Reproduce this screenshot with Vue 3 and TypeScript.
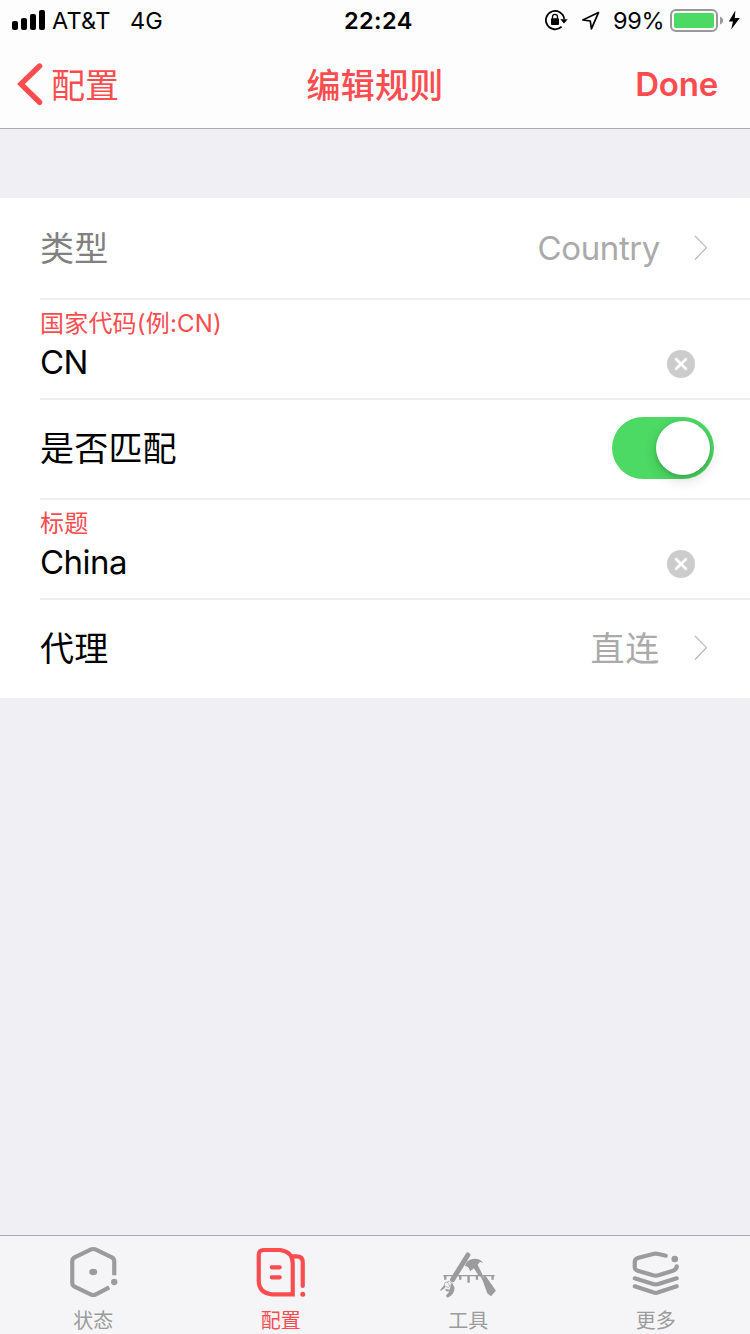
<script setup lang="ts">
import { ref } from 'vue'

interface Tab {
  id: string
  label: string
  viewBox: string
}

const tabs: Tab[] = [
  { id: 'status', label: '状态', viewBox: '-3.75 18 270 198' },
  { id: 'config', label: '配置', viewBox: '3.75 18 270 198' },
  { id: 'tools', label: '工具', viewBox: '-3.75 18 270 198' },
  { id: 'more', label: '更多', viewBox: '3.75 18 270 198' },
]
const activeTab = ref('config')
const code = ref('CN')
const title = ref('China')
const matched = ref(true)
</script>

<template>
  <div class="screen">
    <header class="top">
      <div class="status-bar">
        <svg class="signal" width="34" height="40" viewBox="0 0 34 40">
          <rect x="0" y="21" width="6" height="9" rx="2" />
          <rect x="9" y="18" width="6" height="12" rx="2" />
          <rect x="18" y="14" width="6" height="16" rx="2" />
          <rect x="27" y="10" width="6" height="20" rx="2" />
        </svg>
        <span class="carrier">AT&amp;T</span>
        <span class="network">4G</span>
        <span class="clock">22:24</span>
        <svg class="lock" width="26" height="40" viewBox="0 0 26 40">
          <path d="M17.6 26.6A9.2 9.2 0 1 1 20.2 18.8" fill="none" stroke="#000" stroke-width="1.8" />
          <path d="M16.3 19.2H23.7L20 23.4Z" />
          <rect x="7" y="18.3" width="8" height="6.7" rx="1" />
          <path d="M8.5 19V16.8a2.5 2.5 0 0 1 5 0V19" fill="none" stroke="#000" stroke-width="1.3" />
        </svg>
        <svg class="location" width="20" height="40" viewBox="0 0 20 40">
          <path d="M17.5 12.6L1.8 20L9.3 21L10.4 28.8Z" fill="none" stroke="#000" stroke-width="1.7" stroke-linejoin="round" />
        </svg>
        <span class="percent">99%</span>
        <svg class="battery" width="72" height="40" viewBox="0 0 72 40">
          <rect x="1" y="10" width="46" height="21" rx="5" fill="none" stroke="#98989a" stroke-width="2" />
          <rect x="4" y="13" width="40" height="15" rx="2" fill="#4cd964" />
          <path d="M50 16.5C54 18 54 23 50 24.5Z" fill="#98989a" />
          <path d="M65.4 10.4L58.8 21.4H63L61.2 29.6L69.8 18H64.8Z" />
        </svg>
      </div>
      <nav class="nav">
        <button class="back">
          <svg width="28" height="44" viewBox="0 0 28 44">
            <path d="M23.6 4L4.9 22L23.6 40.3" fill="none" stroke="#fc4c4f" stroke-width="5.4" stroke-linecap="round" stroke-linejoin="miter" />
          </svg>
          <span>配置</span>
        </button>
        <h1>编辑规则</h1>
        <button class="done">Done</button>
      </nav>
    </header>

    <main class="form">
      <div class="row">
        <span class="label muted">类型</span>
        <span class="value country">Country</span>
        <svg class="chevron" width="16" height="28" viewBox="0 0 16 28">
          <path d="M2 2L13.5 13.7L2 25.5" />
        </svg>
      </div>
      <div class="row">
        <div class="field">
          <span class="caption">国家代码(例:CN)</span>
          <span class="input code">{{ code }}</span>
        </div>
        <svg class="clear" width="28" height="28" viewBox="0 0 28 28" @click="code = ''">
          <circle cx="14" cy="14" r="14" />
          <path d="M9.2 9.2L18.8 18.8M18.8 9.2L9.2 18.8" />
        </svg>
      </div>
      <div class="row">
        <span class="label">是否匹配</span>
        <button class="switch" :class="{ on: matched }" @click="matched = !matched">
          <span class="knob"></span>
        </button>
      </div>
      <div class="row">
        <div class="field">
          <span class="caption">标题</span>
          <span class="input">{{ title }}</span>
        </div>
        <svg class="clear" width="28" height="28" viewBox="0 0 28 28" @click="title = ''">
          <circle cx="14" cy="14" r="14" />
          <path d="M9.2 9.2L18.8 18.8M18.8 9.2L9.2 18.8" />
        </svg>
      </div>
      <div class="row">
        <span class="label">代理</span>
        <span class="value proxy">直连</span>
        <svg class="chevron" width="16" height="28" viewBox="0 0 16 28">
          <path d="M2 2L13.5 13.7L2 25.5" />
        </svg>
      </div>
    </main>

    <footer class="tabs">
      <button
        v-for="tab in tabs"
        :key="tab.id"
        class="tab"
        :class="{ active: activeTab === tab.id }"
        @click="activeTab = tab.id"
      >
        <svg width="90" height="66" :viewBox="tab.viewBox" fill="none" stroke="currentColor" stroke-width="12.5" stroke-linecap="round" stroke-linejoin="round">
          <template v-if="tab.id === 'status'">
            <path d="M192 136V94Q192 86 185 82L137 59Q129 55 121 59L73 82Q66 86 66 94V158Q66 166 73 170L121 193Q129 197 137 193L177 172" stroke-linecap="butt" />
            <ellipse cx="129" cy="126" rx="12" ry="9.5" fill="currentColor" stroke="none" />
            <circle cx="192" cy="156" r="9.5" fill="currentColor" stroke="none" />
          </template>
          <template v-else-if="tab.id === 'config'">
            <path d="M87 60H136Q174 65 174 101V193H112Q72 190 72 151V75Q72 60 87 60Z" stroke-linejoin="miter" />
            <path d="M172 79H186Q204 79 204 97V168" />
            <path d="M111 112H135M111 142H135" />
            <circle cx="204" cy="193" r="7.5" fill="currentColor" stroke="none" />
          </template>
          <template v-else-if="tab.id === 'tools'">
            <path d="M54 137H208" stroke-width="4" stroke-linecap="butt" />
            <path d="M60 137V149M105 137V149M130 137V158M155 137V149M178 137V149M202 137V149" stroke-width="7" stroke-linecap="butt" />
            <path d="M128 75L82 149" stroke-width="15" />
            <path d="M63 153L72 149L82 160L73 176L56 166Z" stroke="none" fill="#f5f5f7" />
            <path d="M60 158L73 153L79 161L70 173L58 167ZM67 157L73 168" stroke-width="2" />
            <path d="M80 157L88 173Q88 193 67 203L62 197L73 184Q58 186 61 176L73 179ZM58 164L45 179L46 183L60 173Z" stroke="none" fill="currentColor" />
            <path d="M119 107Q124 90 142 87Q161 83 174 98L164 96L157 104L172 134L160 137L146 115L135 124L129 112ZM171 148L183 140L212 182L197 199L186 190Z" stroke="none" fill="currentColor" />
            <path d="M165 133L175 150" stroke-width="6" stroke-linecap="butt" />
          </template>
          <template v-else>
            <path d="M168 77L146 72Q138 70 130 72L84 84Q75 87 75 96V113Q75 119 84 122L130 136Q138 138 146 136L190 122Q201 118 201 109" />
            <path d="M75 145L130 162Q138 164 146 162L201 145M75 169L130 187Q138 190 146 187L201 169" />
            <circle cx="195" cy="87" r="10" fill="currentColor" stroke="none" />
          </template>
        </svg>
        <span>{{ tab.label }}</span>
      </button>
    </footer>
  </div>
</template>

<style>
body {
  margin: 0;
}
</style>

<style scoped>
.screen {
  width: 750px;
  height: 1334px;
  display: flex;
  flex-direction: column;
  background: #efeff4;
  color: #000;
  font-family: Inter, "Noto Sans CJK SC", sans-serif;
  overflow: hidden;
}

button {
  border: 0;
  padding: 0;
  margin: 0;
  background: none;
  font: inherit;
  color: inherit;
}

svg {
  display: block;
  flex: none;
}

.top {
  height: 129px;
  box-sizing: border-box;
  background: #fdfdfd;
  border-bottom: 1px solid #a9a9af;
}

.status-bar {
  height: 40px;
  display: flex;
  padding-left: 12px;
  font-size: 23.5px;
  line-height: 41px;
  white-space: nowrap;
}

.status-bar span {
  flex: none;
}

.carrier {
  width: 78px;
  margin-left: 6px;
  letter-spacing: 0.25px;
}

.network {
  width: 214px;
}

.clock {
  width: 200px;
  font-weight: 600;
  letter-spacing: 0.4px;
}

.location {
  margin-left: 11px;
}

.percent {
  width: 57px;
  margin-left: 12px;
  letter-spacing: -0.3px;
}

.nav {
  height: 88px;
  display: grid;
  grid-template-columns: 1fr auto 1fr;
  align-items: center;
  color: #fc4c4f;
  font-size: 34px;
  line-height: 88px;
}

.back {
  display: flex;
  align-items: center;
  padding-left: 16px;
}

.back span {
  margin-left: 7px;
  padding-top: 3px;
  line-height: 85px;
}

.nav h1 {
  margin: 0;
  padding-top: 3px;
  font-size: 34px;
  line-height: 85px;
  font-weight: 500;
  letter-spacing: 0.2px;
}

.done {
  justify-self: end;
  padding-right: 32px;
  font-size: 33px;
  font-weight: 600;
  letter-spacing: -0.2px;
}

.form {
  margin-top: 69px;
  background: #fff;
}

.row {
  height: 100px;
  display: flex;
  align-items: center;
  position: relative;
  padding-left: 40px;
  font-size: 34px;
}

.row + .row::before {
  content: "";
  position: absolute;
  left: 40px;
  right: 0;
  top: 0;
  height: 2px;
  background: #f0f0f1;
}

.label {
  flex: 1;
  padding-bottom: 4px;
  letter-spacing: 0.2px;
}

.muted {
  color: #808080;
}

.value {
  color: #aaa;
}

.country {
  font-size: 33px;
  letter-spacing: -0.4px;
}

.proxy {
  padding-bottom: 4px;
  letter-spacing: 0.7px;
}

.chevron {
  margin-left: 33px;
  margin-right: 41px;
  fill: none;
  stroke: #b8b8bb;
  stroke-width: 1.2;
}

.field {
  flex: 1;
  height: 100px;
  display: flex;
  flex-direction: column;
}

.caption {
  margin-top: 10px;
  height: 31px;
  font-size: 24px;
  line-height: 32px;
  letter-spacing: 0.2px;
  color: #fc4c4f;
}

.input {
  height: 42px;
  font-size: 33px;
  line-height: 46px;
  letter-spacing: -0.5px;
}

.clear {
  margin: 32px 55px 0 0;
  fill: #ccc;
}

.clear path {
  fill: none;
  stroke: #fff;
  stroke-width: 2.8;
  stroke-linecap: round;
}

.switch {
  width: 102px;
  height: 62px;
  box-sizing: border-box;
  display: flex;
  padding: 4px;
  margin-right: 36px;
  border-radius: 31px;
  background: #e5e5e5;
}

.switch.on {
  justify-content: flex-end;
  background: #4cd964;
}

.knob {
  width: 54px;
  height: 54px;
  border-radius: 50%;
  background: #fff;
  box-shadow: 0 5px 14px rgba(0, 0, 0, 0.15), 0 2px 4px rgba(0, 0, 0, 0.15);
}

.tabs {
  height: 99px;
  box-sizing: border-box;
  margin-top: auto;
  display: grid;
  grid-template-columns: repeat(4, 1fr);
  background: #f5f5f7;
  border-top: 1px solid #a9a9ae;
}

.tab {
  display: flex;
  flex-direction: column;
  align-items: center;
  color: #9b9b9b;
  font-size: 20px;
  line-height: 34px;
}

.tab span {
  margin-left: -1px;
  margin-top: 2px;
}

.tab.active {
  color: #fc4c4f;
}
</style>
